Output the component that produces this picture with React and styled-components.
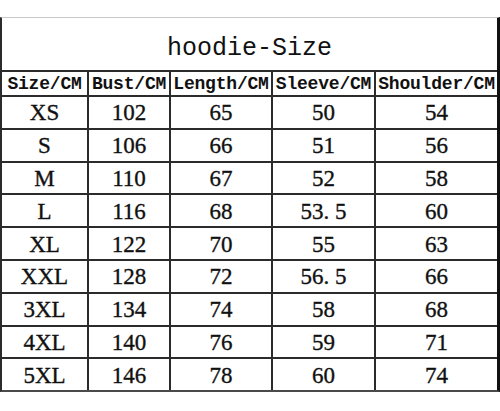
import React from "react";
import styled, { createGlobalStyle } from "styled-components";

const GlobalStyle = createGlobalStyle`
    html, body {
        margin: 0;
        padding: 0;
        background: #ffffff;
    }
`;

const Page = styled.div`
    width: 500px;
    height: 411px;
    padding-top: 17px;
    box-sizing: border-box;
    background: #fff;
`;

// 격자 선은 배경색 + gap 으로 그린다
const Grid = styled.div`
    display: grid;
    grid-template-columns: 85px 80px 100px 101px 121px;
    grid-template-rows: 52px 23px repeat(9, 30.8px);
    gap: 2px;
    width: 500px;
    box-sizing: border-box;
    background: #2b2b2b;
    border-top: 1px solid #c8c8c8;
    border-left: 2px solid #2b2b2b;
    border-right: 3px solid #111;
    border-bottom: 2px solid #4a4a4a;
`;

const Title = styled.div`
    grid-column: 1 / -1;
    background: #fff;
    display: flex;
    align-items: center;
    justify-content: center;
    padding-top: 9px;
    box-sizing: border-box;
    font-family: "Liberation Mono", monospace;
    font-size: 25px;
    color: #111;
`;

const HeadCell = styled.div`
    background: #fff;
    display: flex;
    align-items: center;
    justify-content: center;
    padding-top: 1px;
    box-sizing: border-box;
    font-family: "Liberation Mono", monospace;
    font-size: 18px;
    font-weight: bold;
    letter-spacing: -0.2px;
    color: #111;
    white-space: nowrap;
`;

const Cell = styled.div`
    background: #fff;
    display: flex;
    align-items: center;
    justify-content: center;
    padding-top: 2px;
    box-sizing: border-box;
    font-family: "Liberation Serif", serif;
    font-size: 23px;
    color: #111;
    -webkit-text-stroke: 0.35px #111;
`;

const headers = ["Size/CM", "Bust/CM", "Length/CM", "Sleeve/CM", "Shoulder/CM"];

const rows = [
    ["XS", "102", "65", "50", "54"],
    ["S", "106", "66", "51", "56"],
    ["M", "110", "67", "52", "58"],
    ["L", "116", "68", "53. 5", "60"],
    ["XL", "122", "70", "55", "63"],
    ["XXL", "128", "72", "56. 5", "66"],
    ["3XL", "134", "74", "58", "68"],
    ["4XL", "140", "76", "59", "71"],
    ["5XL", "146", "78", "60", "74"],
];

const App = () => {
    return (
        <Page>
            <GlobalStyle />
            <Grid>
                <Title>hoodie-Size</Title>
                {headers.map((h) => (
                    <HeadCell key={h}>{h}</HeadCell>
                ))}
                {rows.map((row) =>
                    row.map((v, i) => <Cell key={row[0] + i}>{v}</Cell>)
                )}
            </Grid>
        </Page>
    );
};

export default App;
